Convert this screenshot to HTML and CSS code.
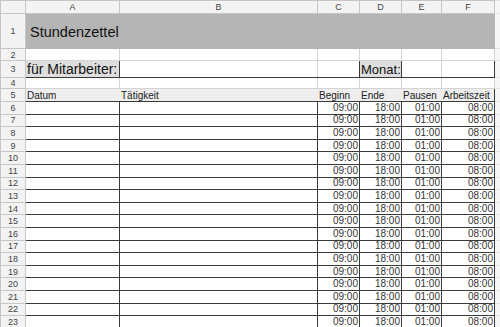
FILE: index.html
```html
<!DOCTYPE html>
<html lang="de">
<head>
    <meta charset="UTF-8">
    <meta name="viewport" content="width=device-width, initial-scale=1.0">
    <title>Stundenzettel</title>
    <link rel="stylesheet" href="styles.css">
</head>
<body>
    <div class="sheet">
        <table class="grid">
            <colgroup>
                <col class="c-rh">
                <col class="c-a">
                <col class="c-b">
                <col class="c-c">
                <col class="c-d">
                <col class="c-e">
                <col class="c-f">
                <col class="c-rest">
            </colgroup>
            <tr class="r-head">
                <th class="corner"></th>
                <th>A</th>
                <th>B</th>
                <th>C</th>
                <th>D</th>
                <th>E</th>
                <th>F</th>
                <th class="rest"></th>
            </tr>
            <tr class="r-title">
                <th>1</th>
                <td colspan="6" class="title">Stundenzettel</td>
                <td class="rest"></td>
            </tr>
            <tr class="r-2">
                <th>2</th>
                <td></td><td></td><td></td><td></td><td></td><td></td>
                <td class="rest"></td>
            </tr>
            <tr class="r-3">
                <th>3</th>
                <td class="label box">für Mitarbeiter:</td>
                <td class="box open-r"></td>
                <td class="box open-l"></td>
                <td class="label box small">Monat:</td>
                <td class="box open-r"></td>
                <td class="box open-l"></td>
                <td class="rest"></td>
            </tr>
            <tr class="r-4">
                <th>4</th>
                <td></td><td></td><td></td><td></td><td></td><td></td>
                <td class="rest"></td>
            </tr>
            <tr class="r-5">
                <th>5</th>
                <td>Datum</td>
                <td>Tätigkeit</td>
                <td>Beginn</td>
                <td>Ende</td>
                <td>Pausen</td>
                <td>Arbeitszeit</td>
                <td class="rest"></td>
            </tr>
        </table>
    </div>

    <script>
        grid = document.querySelector(".grid");
        for (n = 6; n <= 23; n++)
        {
            row = grid.insertRow();
            row.className = "r-data";
            row.innerHTML = "<th>" + n + "</th><td></td><td></td>"
                + "<td class='num'>09:00</td><td class='num'>18:00</td>"
                + "<td class='num'>01:00</td><td class='num'>08:00</td>"
                + "<td class='rest'></td>";
        }
    </script>
</body>
</html>
```

FILE: styles.css
```css
html, body {
    margin: 0;
    padding: 0;
    background-color: #fff;
}
.sheet {
    width: 500px;
    height: 327px;
    overflow: hidden;
    font-family: "Liberation Sans", Arial, sans-serif;
}
.grid {
    border-collapse: collapse;
    table-layout: fixed;
    width: 500px;
}
.c-rh { width: 25px; }
.c-a { width: 94px; }
.c-b { width: 198px; }
.c-c { width: 42px; }
.c-d { width: 42px; }
.c-e { width: 40px; }
.c-f { width: 53px; }
.c-rest { width: 6px; }

.grid th, .grid td {
    padding: 0;
    border: 1px solid #d4d4d4;
    white-space: nowrap;
    overflow: hidden;
}
.grid th {
    background-color: #f3f3f3;
    border-color: #c6c6c6;
    color: #444;
    font-size: 9px;
    font-weight: normal;
    text-align: center;
}
.grid td {
    font-size: 10px;
    color: #222;
}
.grid .rest {
    background-color: #f7f7f7;
    border-color: #e6e6e6;
}

.r-head { height: 13px; }
.r-title { height: 35px; }
.r-2 { height: 12px; }
.r-3 { height: 16px; }
.r-4 { height: 11px; }
.r-5 { height: 13px; }
.r-data { height: 12.6px; }

.grid .title {
    background-color: #b5b5b5;
    font-size: 14.5px;
    color: #111;
    padding-left: 4px;
    padding-top: 1px;
    border-color: #b5b5b5;
}

.r-3 td {
    font-size: 14px;
    color: #111;
}
.r-3 td.small {
    font-size: 13px;
}
.r-3 .box {
    border: 1px solid #3a3a3a;
}
.r-3 .label {
    background-color: #dedede;
    padding-left: 1px;
}
.r-3 .open-r {
    border-right-color: #d4d4d4;
}
.r-3 .open-l {
    border-left-color: #d4d4d4;
}
.r-3 .rest {
    border-left-color: #3a3a3a;
}

.r-5 td {
    background-color: #eeeeee;
    border-top: 1px solid #3a3a3a;
    border-bottom: 1px solid #3a3a3a;
    border-left-color: #eeeeee;
    border-right-color: #eeeeee;
    padding-left: 1px;
}
.r-5 td:nth-child(2) {
    border-left-color: #3a3a3a;
}
.r-5 td:nth-child(7) {
    border-right-color: #3a3a3a;
}
.r-5 .rest {
    background-color: #f7f7f7;
    border-color: #e6e6e6;
    border-left-color: #3a3a3a;
}

.r-data td {
    border: 1px solid #3a3a3a;
    line-height: 10px;
}
.r-data .num {
    text-align: right;
    padding-right: 1px;
    color: #333;
}
.r-data .rest {
    border-color: #e6e6e6;
    border-left-color: #3a3a3a;
}
```
